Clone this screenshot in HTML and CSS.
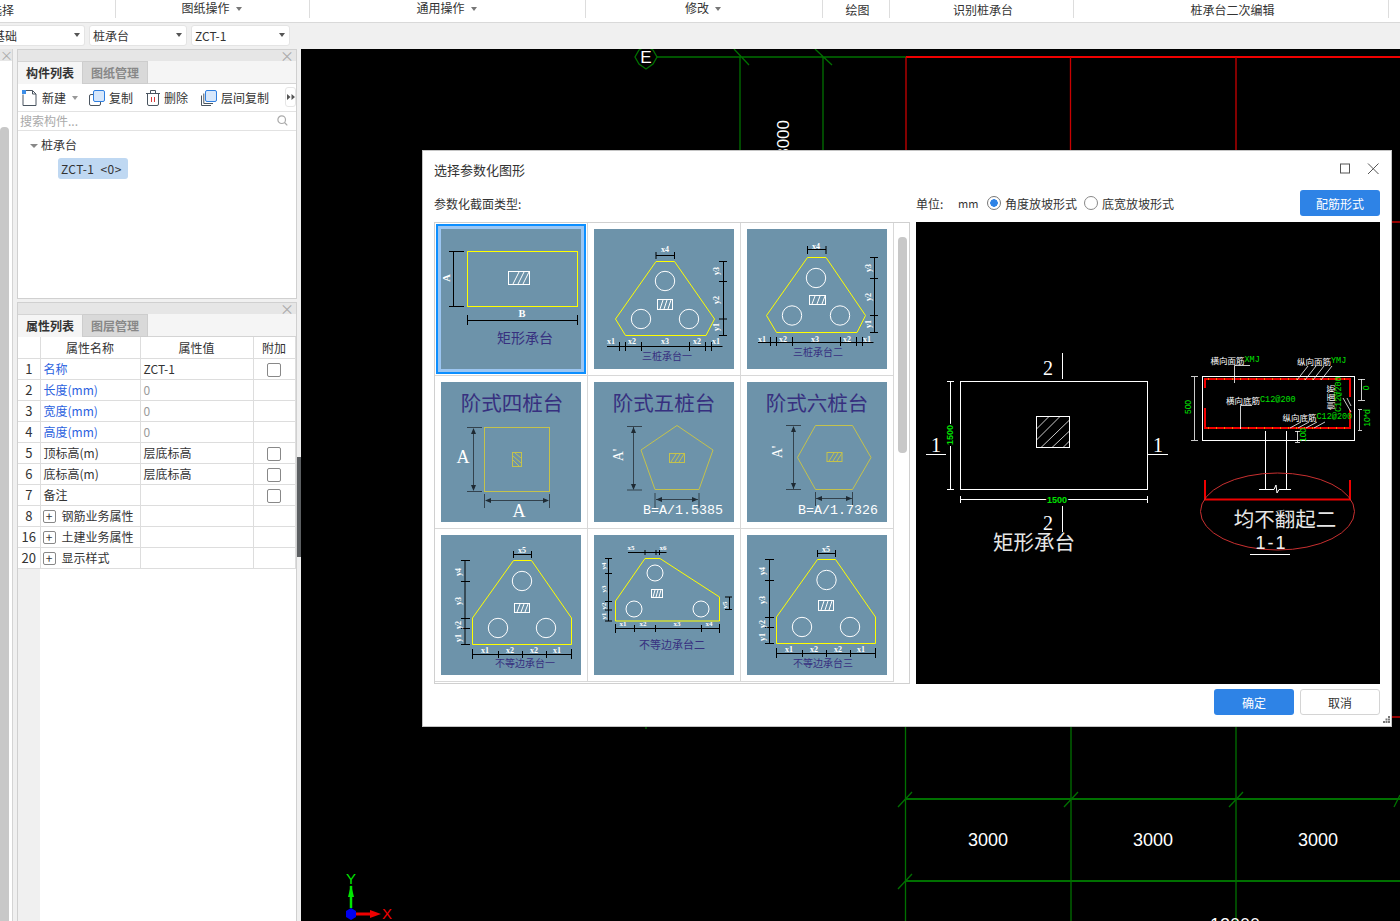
FILE: index.html
```html
<!DOCTYPE html>
<html lang="zh">
<head>
<meta charset="utf-8">
<title>选择参数化图形</title>
<link rel="stylesheet" href="styles.css">
</head>
<body>
<header class="ribbon">
  <div class="rb rb-a"><span class="clip-left">选择</span></div>
  <div class="rb rb-b up">图纸操作<i class="caret"></i></div>
  <div class="rb rb-c up">通用操作<i class="caret"></i></div>
  <div class="rb rb-d up">修改<i class="caret"></i></div>
  <div class="rb rb-e">绘图</div>
  <div class="rb rb-f">识别桩承台</div>
  <div class="rb rb-g">桩承台二次编辑</div>
</header>
<div class="selects">
  <div class="sel sel-a"><span class="clip-left2">基础</span><i class="caret dark"></i></div>
  <div class="sel sel-b"><span>桩承台</span><i class="caret dark"></i></div>
  <div class="sel sel-b"><span>ZCT-1</span><i class="caret dark"></i></div>
</div>
<main class="main">
  <aside class="side">
    <div class="strip">
      <div class="strip-head">×</div>
      <div class="strip-body"><div class="strip-thumb"></div></div>
    </div>
    <div class="panels">
      <section class="panel panel-top">
        <div class="panel-head"><span class="close">×</span></div>
        <div class="tabs"><div class="tab on">构件列表</div><div class="tab">图纸管理</div></div>
        <div class="tools">
          <span class="tool t-new">
            <svg width="18" height="18" viewBox="0 0 18 18"><path class="ic-line" d="M2 5.5V16.5H15V5L11.5 1.5H5"/><path class="ic-line" d="M11.5 1.5V5H15"/><rect x="1" y="1" width="4" height="4" class="ic-dots"/></svg>
            新建<i class="caret"></i>
          </span>
          <span class="tool t-copy">
            <svg width="18" height="18" viewBox="0 0 18 18"><rect x="1.5" y="5.5" width="11" height="11" rx="1.5" class="ic-line"/><rect x="5.5" y="1.5" width="11" height="11" rx="1.5" class="ic-blue"/></svg>
            复制
          </span>
          <span class="tool t-del">
            <svg width="16" height="18" viewBox="0 0 16 18"><path class="ic-line" d="M1 4.5H15M5.5 4.5V1.5H10.5V4.5M2.5 4.5V15A1.5 1.5 0 0 0 4 16.5H12A1.5 1.5 0 0 0 13.5 15V4.5"/><path class="ic-red" d="M6.5 8V13M9.5 8V13"/></svg>
            删除
          </span>
          <span class="tool t-lvl">
            <svg width="18" height="18" viewBox="0 0 18 18"><path class="ic-line" d="M1.5 6.5V16.5H11M3.8 4.5V14.5H13"/><rect x="5.5" y="1.5" width="11" height="11" rx="1.5" class="ic-blue"/></svg>
            层间复制
          </span>
          <span class="more">
            <svg width="8" height="8" viewBox="0 0 8 8"><path class="ic-fill" d="M0 1L3.5 4L0 7ZM4.5 1L8 4L4.5 7Z"/></svg>
          </span>
        </div>
        <div class="search">
          <span>搜索构件...</span>
          <svg width="11" height="11" viewBox="0 0 11 11"><circle cx="4.7" cy="4.7" r="3.8" class="ic-gray"/><path class="ic-gray" d="M7.5 7.5L10.3 10.3"/></svg>
        </div>
        <div class="tree">
          <div class="tree-root"><i class="caret"></i>桩承台</div>
          <div class="tree-item">ZCT-1 &lt;0&gt;</div>
        </div>
      </section>
      <section class="panel panel-bottom">
        <div class="panel-head"><span class="close">×</span></div>
        <div class="tabs"><div class="tab on">属性列表</div><div class="tab">图层管理</div></div>
        <table class="props">
          <colgroup><col class="c1"><col class="c2"><col class="c3"><col class="c4"></colgroup>
          <tr><th></th><th>属性名称</th><th>属性值</th><th>附加</th></tr>
          <tr><td class="n">1</td><td class="blue">名称</td><td>ZCT-1</td><td class="chk"><i class="box"></i></td></tr>
          <tr><td class="n">2</td><td class="blue">长度(mm)</td><td class="mute">0</td><td></td></tr>
          <tr><td class="n">3</td><td class="blue">宽度(mm)</td><td class="mute">0</td><td></td></tr>
          <tr><td class="n">4</td><td class="blue">高度(mm)</td><td class="mute">0</td><td></td></tr>
          <tr><td class="n">5</td><td>顶标高(m)</td><td>层底标高</td><td class="chk"><i class="box"></i></td></tr>
          <tr><td class="n">6</td><td>底标高(m)</td><td>层底标高</td><td class="chk"><i class="box"></i></td></tr>
          <tr><td class="n">7</td><td>备注</td><td></td><td class="chk"><i class="box"></i></td></tr>
          <tr><td class="n">8</td><td><i class="plus">+</i>钢筋业务属性</td><td></td><td></td></tr>
          <tr><td class="n">16</td><td><i class="plus">+</i>土建业务属性</td><td></td><td></td></tr>
          <tr><td class="n">20</td><td><i class="plus">+</i>显示样式</td><td></td><td></td></tr>
        </table>
        <div class="props-fill"></div>
      </section>
    </div>
    <div class="gutter"><div class="handle"></div></div>
  </aside>

  <div class="stage">
    <svg class="cad" width="1099" height="872" viewBox="301 49 1099 872">
      <g class="g1">
        <path d="M657 57H906M740 57V150M823 57V150M734 49L749 65M815 49L832 65"/>
        <path d="M646 46L653 50L657 57L653 64L646 69L639 64L635 57L639 50Z"/>
        <path d="M905.500 727V921M1071 727V921M1236 727V921"/>
        <path d="M646 727V729"/>
        <path class="thick" d="M905 799H1400M905 881H1400"/>
        <path d="M898 807L912 792M1064 807L1078 792M1229 807L1243 792M1394 807L1400 795M898 889L912 874"/>
      </g>
      <g class="r1">
        <path class="thick2" d="M906 57H1400"/>
        <path d="M906 57V150M1070.500 57V150M1236 57V150M1391 222H1400M1391 717H1400"/>
      </g>
      <text class="cad-e" x="646" y="57">E</text>
      <text class="cad-dim" transform="translate(788.500 120) rotate(-90)" text-anchor="end">3000</text>
      <text class="cad-n" x="988" y="840">3000</text>
      <text class="cad-n" x="1153" y="840">3000</text>
      <text class="cad-n" x="1318" y="840">3000</text>
      <text class="cad-n" x="1235" y="925">12000</text>
      <path class="ax-g" d="M351 908V886"/>
      <path class="ax-gf" d="M351 885L354 897H348Z"/>
      <path class="ax-r" d="M354 914H373"/>
      <path class="ax-rf" d="M381 914L370 910V918Z"/>
      <path class="ax-b" d="M351 908L356 911V917L351 920L346 917V911Z"/>
      <text class="ax-t-g" x="351" y="878">Y</text>
      <text class="ax-t-r" x="387" y="913">X</text>
    </svg>

    <div class="dialog">
      <div class="dlg-head">
        <span class="dlg-title">选择参数化图形</span>
        <svg class="dlg-win" width="39" height="12" viewBox="0 0 39 12"><rect x="0.500" y="1" width="9" height="9" class="ic-win"/><path class="ic-win" d="M28 0.500L38.500 11M38.500 0.500L28 11"/></svg>
      </div>
      <div class="dlg-bar">
        <span class="bar-left">参数化截面类型:</span>
        <div class="bar-right">
          <span class="unit">单位:</span><span class="mm">mm</span>
          <label class="radio"><i class="dot on"></i>角度放坡形式</label>
          <label class="radio"><i class="dot"></i>底宽放坡形式</label>
          <button class="btn primary push">配筋形式</button>
        </div>
      </div>
      <div class="dlg-body">
        <div class="list">
          <div class="grid">
            <div class="cell selected"><svg class="thumb" viewBox="0 0 140 140">
              <rect class="y" x="26.500" y="22.500" width="110" height="55"/>
              <rect class="w" x="67.500" y="42.500" width="21" height="13"/>
              <path class="w" d="M72 55L78 43M77 55L83 43M82 55L88 43"/>
              <path class="k" d="M12.500 22.500V77.500M8 22.500H23M8 77.500H23M26.500 91.500H136.500M26.500 86V96M136.500 86V96"/>
              <text class="lbl mid" transform="translate(5.500 49) rotate(-90)">A</text>
              <text class="lbl mid" x="81" y="84">B</text>
              <text class="ttl t14" x="84" y="109">矩形承台</text>
            </svg></div>
            <div class="cell"><svg class="thumb" viewBox="0 0 140 140">
              <path class="y" d="M62 32.500H80.500L120.500 90L112 106.500H31.500L21.500 90Z"/>
              <circle class="w" cx="71" cy="52" r="9.700"/><circle class="w" cx="47" cy="90" r="9.700"/><circle class="w" cx="95" cy="90" r="9.700"/>
              <rect class="w" x="63.500" y="70.500" width="15" height="10"/><path class="w" d="M66 80L69 71M70 80L73 71M74 80L77 71"/>
              <path class="k" d="M62 26.500H80.500M62 23V30M80.500 23V30M129.500 32.500V106.500M125 32.500H133M125 52.500H133M125 90H133M125 106.500H133M13 117.500H128.500M25.500 113V122M31.500 113V122M47.500 113V122M95.500 113V122M111.500 113V122M117.500 113V122"/>
              <text class="lbl s7" x="71" y="20">x4</text>
              <text class="lbl s7" transform="translate(122 42) rotate(-90)">y3</text><text class="lbl s7" transform="translate(122 71) rotate(-90)">y2</text><text class="lbl s7" transform="translate(122 98) rotate(-90)">y1</text>
              <text class="lbl s7" x="17" y="112">x1</text><text class="lbl s7" x="38" y="112">x2</text><text class="lbl s7" x="71" y="112">x3</text><text class="lbl s7" x="103" y="112">x2</text><text class="lbl s7" x="122" y="112">x1</text>
              <text class="ttl t10" x="73" y="128">三桩承台一</text>
            </svg></div>
            <div class="cell"><svg class="thumb" viewBox="0 0 140 140">
              <path class="y" d="M60.500 28.500H79L118.500 86.500L110 103.500H29.500L19.500 86.500Z"/>
              <circle class="w" cx="69" cy="49" r="9.700"/><circle class="w" cx="45" cy="86.500" r="9.700"/><circle class="w" cx="93" cy="86.500" r="9.700"/>
              <rect class="w" x="62.500" y="66.500" width="16" height="9"/><path class="w" d="M65 75L68 67M70 75L73 67M75 75L78 67"/>
              <path class="k" d="M60.500 20.500H79M60.500 17V25M79 17V25M127.500 28.500V103.500M123 28.500H131M123 49.500H131M123 86.500H131M123 103.500H131M11 113.500H126.500M23.500 108V117M29.500 108V117M45.500 108V117M93.500 108V117M109.500 108V117M115.500 108V117"/>
              <text class="lbl s7" x="69" y="17">x4</text>
              <text class="lbl s7" transform="translate(121 39) rotate(-90)">y3</text><text class="lbl s7" transform="translate(121 68) rotate(-90)">y2</text><text class="lbl s7" transform="translate(121 95) rotate(-90)">y1</text>
              <text class="lbl s7" x="15" y="110">x1</text><text class="lbl s7" x="36" y="110">x2</text><text class="lbl s7" x="68" y="110">x3</text><text class="lbl s7" x="100" y="110">x2</text><text class="lbl s7" x="120" y="110">x1</text>
              <text class="ttl t10" x="71" y="124">三桩承台二</text>
            </svg></div>

            <div class="cell"><svg class="thumb" viewBox="0 0 140 140">
              <text class="ttl t20" x="71" y="21">阶式四桩台</text>
              <rect class="o" x="43.500" y="45.500" width="65" height="64"/>
              <rect class="o" x="71.500" y="70.500" width="9" height="14"/><path class="o" d="M72 74L80 81M72 78L78 84M74 71L80 76"/>
              <path class="d" d="M32.500 47V108M26 45.500H41M26 109.500H41M45 118.500H107M43.500 112V126M108.500 112V126"/>
              <path class="af" d="M32.500 46L35 52H30ZM32.500 109L35 103H30ZM44 118.500L50 116V121ZM108 118.500L102 116V121Z"/>
              <text class="big mid" x="22" y="75">A</text><text class="big mid" x="78" y="129">A</text>
            </svg></div>
            <div class="cell"><svg class="thumb" viewBox="0 0 140 140">
              <text class="ttl t20" x="70" y="21">阶式五桩台</text>
              <path class="o" d="M83 43.500L119 68L105 107.500H61L47 68Z"/>
              <rect class="o" x="75.500" y="71.500" width="15" height="9"/><path class="o" d="M77 80L82 72M81 80L86 72M85 80L90 72"/>
              <path class="d" d="M39.500 45V107M33 44.500H48M33 108H48M62 117.500H104M61 111V126M105 111V126"/>
              <path class="af" d="M39.500 45L42 51H37ZM39.500 108L42 102H37ZM62 117.500L68 115V120ZM104 117.500L98 115V120Z"/>
              <text class="big mid s16" transform="translate(24 73) rotate(-90)">A'</text>
              <text class="ratio" x="89" y="128">B=A/1.5385</text>
            </svg></div>
            <div class="cell"><svg class="thumb" viewBox="0 0 140 140">
              <text class="ttl t20" x="70" y="21">阶式六桩台</text>
              <path class="o" d="M68.500 43.500H105.500L124 75.500L105.500 107.500H68.500L50.500 75.500Z"/>
              <rect class="o" x="80" y="70.500" width="15" height="9"/><path class="o" d="M82 79L87 71M86 79L91 71M90 79L95 71"/>
              <path class="d" d="M46.500 45V107M39 43.500H54M39 107.500H54M69 116.500H105M68.500 110V124M105.500 110V124"/>
              <path class="af" d="M46.500 44L49 50H44ZM46.500 107L49 101H44ZM69 116.500L75 114V119ZM105 116.500L99 114V119Z"/>
              <text class="big mid s16" transform="translate(30 70) rotate(-90)">A'</text>
              <text class="ratio" x="91" y="128">B=A/1.7326</text>
            </svg></div>

            <div class="cell"><svg class="thumb" viewBox="0 0 140 140">
              <path class="y" d="M72.500 25.500H90.500L130.500 83V109.500H31.500V83Z"/>
              <circle class="w" cx="81" cy="46" r="9.700"/><circle class="w" cx="57" cy="93" r="9.700"/><circle class="w" cx="105" cy="93" r="9.700"/>
              <rect class="w" x="73.500" y="68.500" width="15" height="9"/><path class="w" d="M76 77L79 69M80 77L83 69M84 77L87 69"/>
              <path class="k" d="M72.500 19.500H90.500M72.500 16V23M90.500 16V23M24 25.500V109.500M20 25.500H29M20 46.500H29M20 83.500H29M20 93.500H29M20 109.500H29M31.500 119.500H130.500M31.500 114V124M57.500 116V123M81.500 116V123M105.500 116V123M130.500 114V124"/>
              <text class="lbl s7" x="81" y="15">x5</text>
              <text class="lbl s7" transform="translate(17 37) rotate(-90)">y4</text><text class="lbl s7" transform="translate(17 66) rotate(-90)">y3</text><text class="lbl s7" transform="translate(17 90) rotate(-90)">y2</text><text class="lbl s7" transform="translate(17 103) rotate(-90)">y1</text>
              <text class="lbl s7" x="44" y="115">x1</text><text class="lbl s7" x="69" y="115">x2</text><text class="lbl s7" x="93" y="115">x2</text><text class="lbl s7" x="116" y="115">x1</text>
              <text class="ttl t10" x="84" y="129">不等边承台一</text>
            </svg></div>
            <div class="cell"><svg class="thumb" viewBox="0 0 140 140">
              <path class="y" d="M51 23.500H66L125.500 62V86H21.500V66Z"/>
              <circle class="w" cx="61" cy="38" r="8"/><circle class="w" cx="40" cy="74" r="8"/><circle class="w" cx="107" cy="74" r="8"/>
              <rect class="w" x="57.500" y="54.500" width="11" height="8"/><path class="w" d="M59 62L61 55M62 62L64 55M65 62L67 55"/>
              <path class="k" d="M34 17.500H72.500M51 15V20M62 15V20M65.500 15V20M14.500 23.500V86M11 23.500H18M11 38.500H18M11 66.500H18M11 75H18M11 86H18M135.500 62V74.500M131 62H138M131 74.500H138M21.500 93.500H125.500M21.500 89V98M40.500 90V97M61.500 90V97M107.500 90V97M125.500 89V98"/>
              <text class="lbl s6" x="37" y="13">x5</text><text class="lbl s6" x="69" y="13">x6</text>
              <text class="lbl s6" transform="translate(10 31) rotate(-90)">y4</text><text class="lbl s6" transform="translate(10 54) rotate(-90)">y3</text><text class="lbl s6" transform="translate(10 71) rotate(-90)">y2</text><text class="lbl s6" transform="translate(10 81) rotate(-90)">y1</text>
              <text class="lbl s6" transform="translate(131 70) rotate(-90)">y5</text>
              <text class="lbl s6" x="29" y="89">x1</text><text class="lbl s6" x="49" y="89">x2</text><text class="lbl s6" x="83" y="89">x3</text><text class="lbl s6" x="115" y="89">x4</text>
              <text class="ttl t11" x="78" y="110">不等边承台二</text>
            </svg></div>
            <div class="cell"><svg class="thumb" viewBox="0 0 140 140">
              <path class="y" d="M70.500 24.500H88.500L128.500 82V108.500H29.500V82Z"/>
              <circle class="w" cx="79.500" cy="45" r="9.700"/><circle class="w" cx="55" cy="92" r="9.700"/><circle class="w" cx="103" cy="92" r="9.700"/>
              <rect class="w" x="71.500" y="65.500" width="15" height="10"/><path class="w" d="M74 75L77 66M78 75L81 66M82 75L85 66"/>
              <path class="k" d="M70.500 18.500H88.500M70.500 15V22M88.500 15V22M22.500 24.500V108.500M18 24.500H27M18 45.500H27M18 82.500H27M18 92.500H27M18 108.500H27M29.500 118.500H128.500M29.500 113V123M55.500 115V122M79.500 115V122M103.500 115V122M128.500 113V123"/>
              <text class="lbl s7" x="79" y="14">x5</text>
              <text class="lbl s7" transform="translate(15 36) rotate(-90)">y4</text><text class="lbl s7" transform="translate(15 65) rotate(-90)">y3</text><text class="lbl s7" transform="translate(15 89) rotate(-90)">y2</text><text class="lbl s7" transform="translate(15 102) rotate(-90)">y1</text>
              <text class="lbl s7" x="42" y="114">x1</text><text class="lbl s7" x="67" y="114">x2</text><text class="lbl s7" x="91" y="114">x2</text><text class="lbl s7" x="114" y="114">x1</text>
              <text class="ttl t10" x="76" y="129">不等边承台三</text>
            </svg></div>
          </div>
          <div class="vscroll"><div class="vthumb"></div></div>
        </div>

        <div class="preview">
          <svg width="464" height="462" viewBox="0 0 464 462">
            <rect class="pw" x="44.500" y="159.500" width="187" height="108"/>
            <rect class="pw" x="120.500" y="194.500" width="33" height="31"/>
            <path class="pw thin" d="M120.500 207L133 194.500M120.500 218L144 194.500M125 225.500L153.500 198M136 225.500L153.500 209M147 225.500L153.500 219"/>
            <path class="pw" d="M146.500 131V157M146.500 284V310M10 232.500H30M232 232.500H252M34.500 160V267M31 159.500H38M31 267.500H38M44 277.500H133M150 277.500H232M44.500 274V281M231.500 274V281"/>
            <text class="pv-n" x="132" y="146">2</text><text class="pv-n" x="132" y="301">2</text>
            <text class="pv-n" x="20" y="223">1</text><text class="pv-n" x="242" y="223">1</text>
            <text class="pv-g" transform="translate(34 213) rotate(-90)">1500</text>
            <text class="pv-g" x="141" y="278">1500</text>
            <text class="pv-t20" x="118" y="321">矩形承台</text>

            <rect class="pw" x="286.500" y="154.500" width="152" height="64"/>
            <path class="pred" d="M289 166V157H434V175M434 188V206H289V186"/>
            <path class="pdots" d="M292 157H432M292 206H432"/>
            <path class="pw" d="M349.500 209V267M370.500 209V267M343 267.500H358L360 263L361 271L363 267.500H375"/>
            <path class="pred" d="M289 258V277.500H434V258"/>
            <ellipse class="pell" cx="361.500" cy="289.500" rx="77" ry="38.500"/>
            <text class="pv-t20" x="369" y="298">均不翻起二</text>
            <text class="pv-11" x="355.500" y="321">1-1</text>
            <path class="pw" d="M334 332.500H374"/>

            <path class="pw thin" d="M334 143.500H318.500V161M392 144L381 158M400 144L389 158M408 144L397 158M416 144L405 158M336 183.500H324.500V207M385 200L374 206M393 200L382 206M401 200L390 206M409 200L398 206M427 176L435 190M431 176L435 184"/>
            <text class="pv-s" x="294.500" y="138">横向面筋<tspan class="gr">XMJ</tspan></text>
            <text class="pv-s" x="381" y="139">纵向面筋<tspan class="gr">YMJ</tspan></text>
            <text class="pv-s" x="310" y="178">横向底筋<tspan class="gr">C12@200</tspan></text>
            <text class="pv-s" x="366.500" y="195">纵向底筋<tspan class="gr">C12@200</tspan></text>
            <text class="pv-s" transform="translate(414 188) rotate(-90)">侧面筋</text>
            <text class="pv-s gr" transform="translate(423 190) rotate(-90)">C12@200</text>
            <path class="pw thin" d="M278.500 155V218M275 154.500H282M275 218.500H282M445.500 157V178M442 157.500H449M442 178.500H449M443.500 188V208M442 187.500H446M442 208.500H446M381.500 209V220M379 209.500H384M379 220.500H384"/>
            <text class="pv-g2" transform="translate(272 185) rotate(-90)">500</text>
            <text class="pv-g2" transform="translate(450 166) rotate(-90)">0</text>
            <text class="pv-g2" transform="translate(451 196) rotate(-90)">10*d</text>
            <text class="pv-g2" transform="translate(387 213) rotate(-90)">100</text>
          </svg>
        </div>
      </div>
      <div class="dlg-foot">
        <button class="btn primary">确定</button>
        <button class="btn plain">取消</button>
        <svg class="grip" width="7" height="7" viewBox="0 0 7 7"><path class="ic-grip" d="M5 0H7V2H5ZM2.500 2.500H4.500V4.500H2.500ZM5 2.500H7V4.500H5ZM0 5H2V7H0ZM2.500 5H4.500V7H2.500ZM5 5H7V7H5Z"/></svg>
      </div>
    </div>
  </div>
</main>
</body>
</html>
```
FILE: styles.css
```css
* { box-sizing: border-box; }
html, body { margin: 0; height: 921px; overflow: hidden; }
body {
  font-family: "Noto Sans CJK SC", "Noto Sans", sans-serif;
  font-size: 12px;
  color: #333;
  background: #f0f0f0;
  display: flex;
  flex-direction: column;
}
i { font-style: normal; display: inline-block; }

.caret {
  width: 0; height: 0;
  border-left: 3.500px solid transparent;
  border-right: 3.500px solid transparent;
  border-top: 4px solid #777;
  margin-left: 6px;
  vertical-align: 2px;
}
.caret.dark { border-top-color: #555; margin: 0; }

/* ribbon */
.ribbon { flex: none; display: flex; height: 23px; background: #fff; border-bottom: 1px solid #d9d9d9; }
.rb { height: 18px; line-height: 20px; text-align: center; border-right: 1px solid #ddd; white-space: nowrap; overflow: hidden; }
.rb.up { line-height: 16px; padding-right: 2px; }
.rb-a { width: 116px; text-align: left; }
.rb-b { width: 194px; }
.rb-c { width: 276px; }
.rb-d { width: 237px; }
.rb-e { width: 67px; padding-left: 3px; }
.rb-f { width: 184px; padding-left: 3px; }
.rb-g { width: 315px; padding-left: 3px; }
.clip-left, .clip-left2 { display: block; margin-left: -10px; }

.selects { flex: none; display: flex; height: 26px; padding: 2px 0 0; gap: 4px; background: #f0f0f0; }
.sel { height: 21px; background: #fff; border: 1px solid #e4e4e4; border-radius: 3px; display: flex; align-items: center; justify-content: space-between; padding: 0 4px 1px 3px; line-height: 19px; }
.sel-a { width: 85px; border-left: 0; border-radius: 0 3px 3px 0; overflow: hidden; }
.sel-b { width: 98px; }
.sel-b + .sel-b { width: 99px; }

/* layout */
.main { flex: 1; display: flex; min-height: 0; }
.side { flex: none; width: 301px; display: flex; background: #f0f0f0; }
.strip { width: 13px; display: flex; flex-direction: column; background: #fff; border-right: 1px solid #d4d4d4; }
.strip-head { height: 12px; line-height: 12px; font-size: 13px; color: #aaa; background: #e6e6e6; text-align: center; }
.strip-body { flex: 1; padding-top: 66px; background: #fff; }
.strip-thumb { width: 9px; height: 100%; background: #c8c8c8; border-radius: 4px 4px 0 0; }
.panels { width: 280px; margin-left: 4px; display: flex; flex-direction: column; gap: 3px; }
.gutter { width: 4px; padding-top: 408px; }
.handle { width: 4px; height: 100px; background: #5c5f62; }

.panel { background: #fff; border: 1px solid #d0d0d0; display: flex; flex-direction: column; }
.panel-top { height: 250px; }
.panel-bottom { flex: 1; min-height: 0; border-bottom: 0; }
.panel-head { flex: none; height: 11px; background: #e6e6e6; text-align: right; padding-right: 2px; }
.close { display: block; line-height: 11px; font-size: 14px; color: #aaa; }
.tabs { flex: none; display: flex; height: 23px; background: #f5f5f5; border-bottom: 1px solid #d4d4d4; }
.tab { width: 65px; height: 23px; line-height: 21px; text-align: center; font-weight: 700; color: #888; background: #d9d9d9; border: 1px solid #cdcdcd; border-left: 0; }
.tab.on { color: #333; background: #f5f5f5; border-bottom: 0; border-top-color: #d4d4d4; }

.tools { flex: none; height: 28px; display: flex; align-items: center; position: relative; border-bottom: 1px solid #e2e2e2; }
.tool { display: flex; align-items: center; gap: 3px; white-space: nowrap; }
.tool .caret { margin-left: 3px; border-top-color: #999; }
.t-new { margin-left: 3px; width: 67px; }
.t-copy { width: 57px; }
.t-del { width: 55px; }
.more { position: absolute; right: 0; top: 3px; width: 11px; height: 20px; background: #fff; border: 1px solid #e6e6e6; border-radius: 3px; display: flex; align-items: center; justify-content: center; }
.ic-line { fill: none; stroke: #4a5560; stroke-width: 1; }
.ic-blue { fill: #d7e7fb; stroke: #2f7fe0; stroke-width: 1; }
.ic-dots { fill: #3b8de8; }
.ic-red { fill: none; stroke: #d83a3a; stroke-width: 1; }
.ic-fill { fill: #555; }
.ic-gray { fill: none; stroke: #aaa; stroke-width: 1.200; }
.ic-win { fill: none; stroke: #555; stroke-width: 1; }
.ic-grip { fill: #777; }

.search { flex: none; height: 19px; display: flex; align-items: center; justify-content: space-between; padding: 0 8px 2px 2px; color: #aaa; border-bottom: 1px solid #e2e2e2; }
.tree { flex: 1; padding: 4px 0 0 12px; }
.tree-root { height: 20px; line-height: 19px; }
.tree-root .caret { margin: 0 3px 0 0; vertical-align: 2px; border-left-width: 4px; border-right-width: 4px; border-top-color: #888; }
.tree-item { margin: 3px 0 0 28px; width: 70px; height: 21px; line-height: 21px; padding-left: 3px; background: #bfd8f2; border-radius: 3px; white-space: pre; letter-spacing: .4px; word-spacing: 3px; }

/* table */
.props { flex: none; border-collapse: collapse; table-layout: fixed; width: 277px; }
.c1 { width: 22px; } .c2 { width: 100px; } .c3 { width: 113px; } .c4 { width: 42px; }
.props th, .props td { height: 21px; padding: 0 3px; border: 1px solid #ddd; border-left-width: 1px; font-weight: 400; line-height: 20px; white-space: nowrap; overflow: hidden; }
.props th { text-align: center; border-top: 0; padding-top: 1px; }
.props tr > :first-child { border-left: 0; }
.props td:nth-child(3) { padding-left: 3px; }
.props .n { text-align: center; font-size: 13px; padding: 0; }
.blue { color: #2b62e0; }
.mute { color: #9a9a9a; }
.chk { text-align: center; }
.box { width: 14px; height: 14px; border: 1px solid #888; border-radius: 2px; vertical-align: -3px; background: #fff; }
.plus { width: 13px; height: 13px; line-height: 10px; margin: 0 6px 0 -1px; border: 1px solid #888; border-radius: 2px; text-align: center; font-size: 12px; vertical-align: 0; }
.props-fill { flex: 1; border-left: 22px solid #f0f0f0; }

/* cad */
.stage { flex: 1; position: relative; background: #000; min-width: 0; }
.cad { display: block; }
.g1 path { fill: none; stroke: #007000; stroke-width: 1.300; }
.g1 path.thick { stroke-width: 2; }
.r1 path { fill: none; stroke: #c80000; stroke-width: 1.300; }
.r1 path.thick2 { stroke: #f00000; stroke-width: 2; }
.cad-e { fill: #fff; font: 17px "Liberation Sans", sans-serif; text-anchor: middle; dominant-baseline: central; }
.cad-dim { fill: #fff; font: 17px "Liberation Sans", sans-serif; }
.cad-n { fill: #fff; font: 18px "Liberation Sans", sans-serif; text-anchor: middle; dominant-baseline: central; }
.ax-g { stroke: #00e600; stroke-width: 2.500; fill: none; }
.ax-gf { fill: #00e600; }
.ax-r { stroke: #f00000; stroke-width: 3; fill: none; }
.ax-rf { fill: #f00000; }
.ax-b { fill: #0000ee; }
.ax-t-g, .ax-t-r { font: 15px "Liberation Sans", sans-serif; text-anchor: middle; dominant-baseline: central; }
.ax-t-g { fill: #00e600; }
.ax-t-r { fill: #f00000; }

/* dialog */
.dialog { position: absolute; left: 121px; top: 101px; width: 970px; height: 577px; background: #fff; border: 1px solid #c4c4c4; display: flex; flex-direction: column; }
.dlg-head { flex: none; height: 34px; display: flex; align-items: center; justify-content: space-between; padding: 2px 12px 0 11px; }
.dlg-title { font-size: 13px; }
.dlg-win { margin-top: 0; }
.dlg-bar { flex: none; height: 37px; display: flex; align-items: center; padding: 0 11px 1px 11px; }
.bar-left { width: 482px; }
.bar-right { flex: 1; display: flex; align-items: center; }
.unit { width: 42px; }
.mm { width: 29px; font-size: 11px; }
.radio { display: flex; align-items: center; gap: 4px; margin-right: 7px; white-space: nowrap; }
.dot { width: 14px; height: 14px; border: 1px solid #888; border-radius: 50%; background: #fff; position: relative; }
.dot.on { border-color: #777; background: radial-gradient(circle, #2e83e6 0 3.500px, #fff 4px); }
.btn { width: 80px; height: 26px; padding: 0; border-radius: 3px; font: 12px "Noto Sans CJK SC", "Noto Sans", sans-serif; border: 1px solid transparent; }
.btn.primary { background: #2e83e6; color: #fff; }
.btn.plain { background: #fff; border-color: #d4d4d4; color: #333; }
.push { margin-left: auto; }

.dlg-body { flex: none; height: 462px; display: flex; padding-left: 11px; }
.list { width: 476px; height: 462px; border: 1px solid #d0d0d0; display: flex; overflow: hidden; }
.grid { flex: none; width: 459px; display: grid; grid-template-columns: repeat(3, 153px); grid-auto-rows: 153px; }
.cell { padding: 6px; border-right: 1px solid #d8d8d8; border-bottom: 1px solid #d8d8d8; }
.thumb { display: block; width: 140px; height: 140px; background: #6d93aa; overflow: hidden; }
.selected .thumb { box-shadow: 0 0 0 3px #9cc6f2, 0 0 0 5px #0d8fff; }
.vscroll { flex: 1; padding: 14px 0 0 4px; }
.vthumb { width: 9px; height: 216px; background: #c8c8c8; border-radius: 4px; }
.preview { width: 464px; height: 462px; margin-left: 6px; background: #000; }
.preview svg { display: block; }

.y { fill: none; stroke: #ffff00; stroke-width: 1; }
.w { fill: none; stroke: #fff; stroke-width: 1; }
.k { fill: none; stroke: #000; stroke-width: 1; }
.o { fill: none; stroke: #c4c24c; stroke-width: 1; }
.d { fill: none; stroke: #33424d; stroke-width: 1; }
.af { fill: #1e2a33; }
.lbl { fill: #fff; font: 700 10.500px "Liberation Serif", serif; text-anchor: middle; dominant-baseline: central; }
.lbl.s7 { font-size: 8px; }
.lbl.s6 { font-size: 7px; }
.ttl { fill: #37307f; text-anchor: middle; dominant-baseline: central; font-family: "Noto Sans CJK SC", sans-serif; transform: translateY(-1.500px); }
.t10 { font-size: 10px; } .t11 { font-size: 11px; } .t14 { font-size: 14px; } .t20 { font-size: 20.500px; }
.big { fill: #fff; font: 18px "Liberation Serif", serif; text-anchor: middle; dominant-baseline: central; }
.big.s16 { font-size: 14px; }
.ratio { fill: #fff; font: 13.300px "Liberation Mono", monospace; text-anchor: middle; dominant-baseline: central; }

.pw { fill: none; stroke: #fff; stroke-width: 1; }
.pw.thin { stroke-width: 0.800; }
.pred { fill: none; stroke: #f00000; stroke-width: 2; }
.pdots { fill: none; stroke: #ffff00; stroke-width: 1; stroke-dasharray: 1 7; }
.pell { fill: none; stroke: #c83030; stroke-width: 1; }
.pv-n { fill: #fff; font: 20px "Liberation Serif", serif; text-anchor: middle; dominant-baseline: central; }
.pv-g { fill: #00e000; font: 700 9px "Liberation Sans", sans-serif; text-anchor: middle; dominant-baseline: central; paint-order: stroke; stroke: #000; stroke-width: 3px; }
.pv-g2 { fill: #00e000; font: 8.500px "Liberation Sans", sans-serif; text-anchor: middle; dominant-baseline: central; }
.pv-t20 { fill: #e6e6e6; font-size: 20.500px; text-anchor: middle; dominant-baseline: central; transform: translateY(-2px); }
.pv-11 { fill: #f0f0f0; font: 18px "Liberation Sans", sans-serif; letter-spacing: 2px; text-anchor: middle; dominant-baseline: central; }
.pv-s { fill: #fff; font-size: 8.500px; dominant-baseline: central; }
.gr { fill: #00e000; font-family: "Liberation Mono", monospace; }

.dlg-foot { flex: 1; display: flex; justify-content: flex-end; gap: 6px; padding: 5px 11px 0 0; position: relative; }
.grip { position: absolute; right: 1px; bottom: 3px; }
```
